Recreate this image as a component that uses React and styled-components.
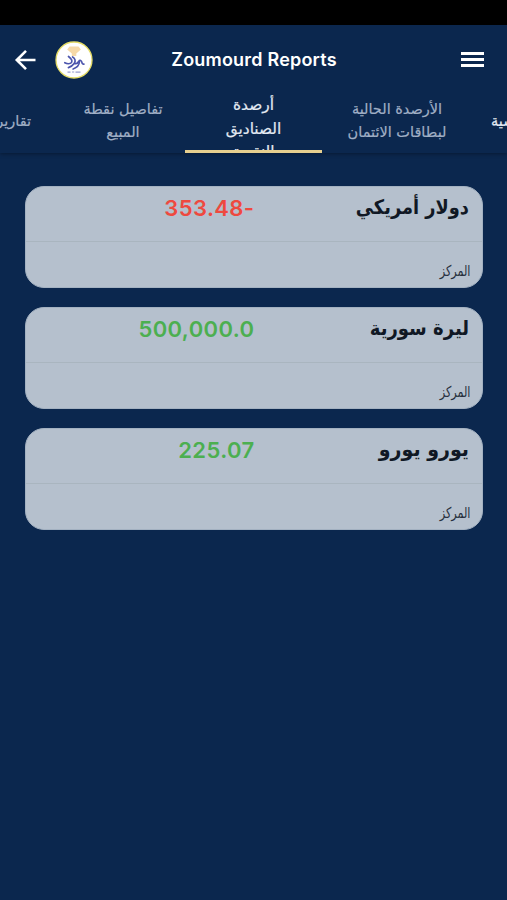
import React from 'react';
import styled, { createGlobalStyle } from 'styled-components';

const GlobalStyle = createGlobalStyle`
    * {
        box-sizing: border-box;
    }
    body {
        margin: 0;
        background: #0b274e;
        font-family: Inter, 'DejaVu Sans', sans-serif;
        overflow: hidden;
    }
`;

const Screen = styled.div`
    display: flex;
    flex-flow: column;
    width: 507px;
    height: 900px;
    overflow: hidden;
    background: #0b274e;
`;

const StatusBar = styled.div`
    flex: none;
    height: 25px;
    background: #000;
`;

const Header = styled.header`
    flex: none;
    height: 128px;
    background: #0b274e;
    box-shadow: 0 1px 4px rgba(0, 0, 0, 0.35);
`;

const Toolbar = styled.div`
    display: grid;
    grid-template-columns: 41px 70px 1fr 108px;
    align-items: center;
    height: 69px;
    padding: 0 23px 0 14px;
    svg {
        display: block;
    }
`;

const Title = styled.h1`
    margin: 0;
    padding: 0 0 0 7px;
    color: #fff;
    font-size: 18px;
    font-weight: 600;
    line-height: 24px;
    letter-spacing: 0.2px;
    text-align: center;
    white-space: nowrap;
`;

const MenuButton = styled.button`
    justify-self: end;
    display: flex;
    flex-flow: column;
    gap: 3px;
    padding: 0;
    border: none;
    background: none;
    span {
        width: 23px;
        height: 3px;
        background: #fff;
    }
`;

const Tabs = styled.nav`
    display: grid;
    grid-template-columns: 61px 124px 137px 150px 35px;
    height: 59px;
    overflow: hidden;
`;

const Tab = styled.div`
    display: flex;
    flex-flow: column;
    justify-content: ${props => props.$active ? 'flex-start' : 'center'};
    align-items: ${props => props.$align || 'center'};
    height: 59px;
    padding: ${props => props.$padding || '0 0 5px'};
    overflow: hidden;
    border-bottom: ${props => props.$active ? '3px solid #e6cf8f' : 'none'};
    color: ${props => props.$bright ? '#e3eaf3' : '#a0afc5'};
    font-family: 'DejaVu Sans', sans-serif;
    font-size: ${props => props.$active ? '15.4px' : '14.5px'};
    line-height: 23.5px;
    white-space: nowrap;
    -webkit-text-stroke: 0.2px;
    span {
        flex: none;
    }
`;

const List = styled.main`
    display: flex;
    flex-flow: column;
    gap: 19px;
    padding: 33px 24.5px 33px 25px;
`;

const StyledCard = styled.section`
    height: 102px;
    border: 1px solid #a3b1c1;
    border-radius: 19px;
    background: #b5c0cd;
    direction: rtl;
    .balance {
        display: grid;
        grid-template-columns: 214px 1fr;
        height: 55px;
        padding: 8px 13px 0;
        border-bottom: 1px solid #a9b5bf;
    }
    .branch {
        padding: 17px 11px 0;
    }
`;

// the arabic face is wide, so labels are condensed towards their right edge
const Label = styled.div`
    color: ${props => props.$strong ? '#101824' : '#27303d'};
    font-family: 'DejaVu Sans', sans-serif;
    font-size: ${props => props.$strong ? '20px' : '15px'};
    font-weight: ${props => props.$strong ? 'bold' : 'normal'};
    line-height: ${props => props.$strong ? '24px' : '25px'};
    white-space: nowrap;
    transform: scaleX(${props => props.$condense});
    transform-origin: right center;
`;

const Amount = styled.div`
    color: ${props => props.$negative ? '#ee493f' : '#4caf50'};
    font-size: 22px;
    font-weight: 600;
    line-height: 27px;
    letter-spacing: 0.4px;
    direction: ltr;
    text-align: right;
`;

const tabs = [
    { lines: ['تقارير'], align: 'flex-end', padding: '0 30px 4px 0' },
    { lines: ['تفاصيل نقطة', 'المبيع'], padding: '0 0 5px' },
    { lines: ['أرصدة', 'الصناديق', 'النقدية'], active: true, bright: true },
    { lines: ['الأرصدة الحالية', 'لبطاقات الائتمان'], padding: '0 0 5px' },
    { lines: ['الرئيسية'], align: 'flex-start', padding: '0 0 4px 19px', bright: true },
];

const balances = [
    { currency: 'دولار أمريكي', amount: '353.48-', negative: true, condense: 0.89 },
    { currency: 'ليرة سورية', amount: '500,000.0', condense: 0.9 },
    { currency: 'يورو يورو', amount: '225.07', condense: 0.95 },
];

const BackIcon = () => (
    <svg width="24" height="24" viewBox="0 0 24 24" fill="none" stroke="#fff" strokeWidth="2.6">
        <path d="M21.5 12H3.5M12 2.8L2.8 12l9.2 9.2" />
    </svg>
);

const Logo = () => (
    <svg width="38" height="38" viewBox="0 0 38 38">
        <circle cx="19" cy="19" r="18" fill="#fff" stroke="#e5dc66" strokeWidth="1.3" />
        <path d="M14.5 5.5h9l2.4 3-4.6 4v2.5h-4.5v-2.5l-4.6-4z" fill="#f6d9a8" />
        <g fill="none" stroke="#4c55ad" strokeWidth="1.7" strokeLinecap="round" strokeLinejoin="round">
            <path d="M13.5 15.5c2.7 1.9 4.3 4.4 3 6-1.4 1.6-4.6 1.3-6.7.2" />
            <path d="M17.6 16c2.6 1.3 3.3 4.1 1.6 6.6-1.2 1.7-3.4 3.2-5.8 4" />
            <path d="M20 22.6c1.6.6 2.8-.6 3.7-2.1 1.2-1.9 2.8-1 3.2.9.3 1.5 1.1 2 2 1.7" />
            <path d="M24.4 20.8c-.2 3.2-2.3 5.8-6.3 7.2" />
        </g>
        <path d="M12.5 31.2h3M17 31h2.2M20.5 31.2h5" stroke="#9aa0cf" strokeWidth="1.2" />
    </svg>
);

const Card = (props) => {
    const { currency, amount, negative, condense } = props;

    return (
        <StyledCard>
            <div className="balance">
                <Label $strong $condense={condense}>{currency}</Label>
                <Amount $negative={negative}>{amount}</Amount>
            </div>
            <div className="branch">
                <Label $condense={0.75}>المركز</Label>
            </div>
        </StyledCard>
    )
}

const App = () => {
    return (
        <Screen>
            <GlobalStyle />
            <StatusBar />
            <Header>
                <Toolbar>
                    <BackIcon />
                    <Logo />
                    <Title>Zoumourd Reports</Title>
                    <MenuButton aria-label="Menu">
                        <span />
                        <span />
                        <span />
                    </MenuButton>
                </Toolbar>
                <Tabs>
                    {tabs.map(tab => (
                        <Tab
                            key={tab.lines[0]}
                            $active={tab.active}
                            $bright={tab.bright}
                            $align={tab.align}
                            $padding={tab.padding}
                        >
                            {tab.lines.map(line => <span key={line} dir="rtl">{line}</span>)}
                        </Tab>
                    ))}
                </Tabs>
            </Header>
            <List>
                {balances.map(item => <Card key={item.currency} {...item} />)}
            </List>
        </Screen>
    )
}

export default App;
